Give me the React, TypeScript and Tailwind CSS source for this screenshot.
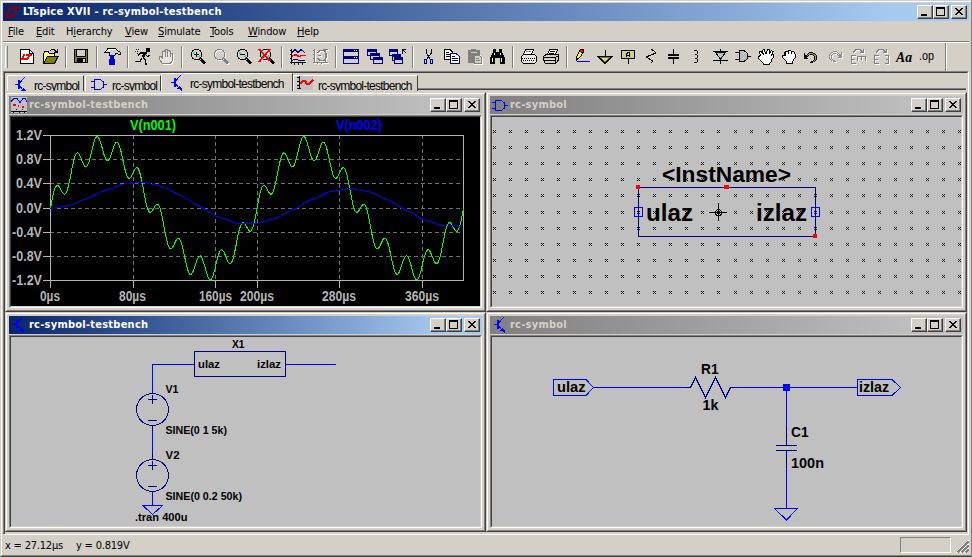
import React from "react";

const TAHOMA = "font-['DejaVu_Sans_Condensed','DejaVu_Sans',sans-serif]";
const ARIAL = "font-['Liberation_Sans',Arial,sans-serif]";

/* ---------- small glyphs ---------- */

function LTLogo() {
  return (
    <svg width="16" height="16" viewBox="0 0 16 16" fill="none" stroke="#8b0000" strokeWidth="2" className="block">
      <path d="M4.5 3 L1.5 12.5 H8" />
      <path d="M6 4 H15 M11.5 4 L8.5 13" />
    </svg>
  );
}

function TransistorIcon() {
  return (
    <svg width="16" height="16" viewBox="0 0 16 16" fill="none" stroke="#0000ff" shapeRendering="crispEdges" className="block">
      <path d="M2 7.5 H6" strokeWidth="1" />
      <path d="M6 3 V12" strokeWidth="2" />
      <path d="M7 5.5 L12 0 M7 9.5 L12 15" strokeWidth="1" />
      <path d="M13 16 V14 L10.5 11 L8 14 H10 L12 16 Z" fill="#0000ff" stroke="none" />
    </svg>
  );
}

function GateIcon() {
  return (
    <svg width="16" height="16" viewBox="0 0 16 16" fill="none" stroke="#0000ff" shapeRendering="crispEdges" className="block">
      <path d="M3.5 3.5 H9 L12.5 6 V11 L9 13.5 H3.5 Z M0 5.5 H3 M0 11.5 H3 M13 8.5 H16" />
    </svg>
  );
}

function PlotIcon() {
  return (
    <svg width="16" height="16" viewBox="0 0 16 16" fill="none" shapeRendering="crispEdges" className="block">
      <rect width="16" height="16" fill="#c0c0c0" />
      <path d="M0 4.5 L3 1.5 H6 L9 5.5 L12 1.5 H14 L16 4.5" stroke="#0000ff" />
      <path d="M2 8 H5 M7 9 H8 M11 10 H13" stroke="#ff0000" strokeWidth="2" />
      <path d="M0 14.5 H16 M2.5 15 V16 M8.5 15 V16 M13.5 15 V16" stroke="#000" />
      <path d="M5 12.5 H6 M11 12.5 H12" stroke="#000080" />
    </svg>
  );
}

function TraceIcon() {
  return (
    <svg width="17" height="14" viewBox="0 0 17 14" fill="none" shapeRendering="crispEdges" className="block">
      <rect width="16" height="14" fill="#c0c0c0" />
      <path d="M2.5 0 V13 M0 1.5 H2 M0 5.5 H2 M0 9.5 H2 M0 12.5 H4" stroke="#000" />
      <path d="M3 7.5 L6 5 L8 5 L10 8 L12 8 L16 4" stroke="#ff0000" strokeWidth="2" />
    </svg>
  );
}

/* ---------- toolbar icons, each on a 23 x 22 cell ---------- */

const K = "#000";
const N = "#000080";

function Cell({ children, smooth }: { children: React.ReactNode; smooth?: boolean }) {
  return (
    <svg
      width="23"
      height="22"
      viewBox="0 0 23 22"
      fill="none"
      className="shrink-0"
      shapeRendering={smooth ? "auto" : "crispEdges"}
    >
      {children}
    </svg>
  );
}

/* Greyed-out drawing: a white copy, one pixel down and right, below the grey one */
function Disabled({ children }: { children: React.ReactNode }) {
  return (
    <>
      <g stroke="#fff" transform="translate(1 1)">{children}</g>
      <g stroke="#808080">{children}</g>
    </>
  );
}

const palette: Record<string, string> = {
  k: "#000000",
  w: "#ffffff",
  g: "#808080",
  y: "#ffff00",
  o: "#a0a000",
  r: "#ff0000",
  b: "#0000ff",
  c: "#00e0e0",
};

/* One character per pixel, a dot is transparent */
function Pixels({ x, y, rows, only, tint }: { x: number; y: number; rows: string[]; only?: string; tint?: string }) {
  return (
    <g stroke="none">
      {rows.flatMap((row, j) =>
        row.split("").map((c, i) =>
          c === "." || (only && c !== only) ? null : (
            <rect key={`${i}-${j}`} x={x + i} y={y + j} width="1" height="1" fill={tint ?? palette[c]} />
          ),
        ),
      )}
    </g>
  );
}

const lens = [
  "...kkkkk.......",
  ".kk.....kk.....",
  ".k.......k.....",
  "k.cc......k....",
  "k.c.......k....",
  "k.........k....",
  "k.......c.k....",
  "k......cc.k....",
  ".k......ck.....",
  ".kk.....kkk....",
  "...kkkkkk.kk...",
  ".........kkkk..",
  "..........kkkk.",
  "...........kkkk",
  "............kk.",
];

const pencil = [
  ".....kkkk......",
  "....krrrk......",
  "....krrrk......",
  "...kyykkk......",
  "...kyyyk.......",
  "..kyyyk........",
  "..kyyyk........",
  ".kyyyk.........",
  ".kyyk..........",
  ".kkk...........",
  ".kk............",
  ".k.............",
  "..bbbbbbbbbbbbb",
];

const undoArrow = [
  ".....kkkk.....",
  "k...kooookk...",
  "k..kookkkook..",
  "kkkok....kook.",
  "kkkk......kok.",
  "kkk.......kok.",
  "kkkk......kok.",
  "..........kok.",
  ".........kok..",
  ".......kkok...",
  "......kkk.....",
];

const redoArrow = undoArrow.map((r) => r.split("").reverse().join(""));

const coil = ["kkk.", "...k", "...k", "...k", ".kk.", "...k", "...k", "...k", ".kk.", "...k", "...k", "...k", "kkk."];

function MirrorE() {
  return (
    <path d="M4.5 9 V18 M4 9.5 H9 M4 13.5 H8 M4 17.5 H9 M6 6.5 L9 3.5 H13 L16 6.5 M13 6.5 H17 M16.5 3 V7" />
  );
}

const handPath =
  "M7.5 17.5 L4 12.5 V10.5 H6 L7.5 12 V5.5 H9 V4.5 H10.5 V3.5 H12 V4.5 H14 V5.5 H15.5 V7 H17.5 V14 L15.5 17.5 Z";

const groups: React.ReactNode[][] = [
  [
    <Cell key="new">
      <path d="M4.5 3.5 H13.5 L17.5 7.5 V17.5 H4.5 Z" fill="#fff" stroke={K} />
      <path d="M13.5 3.5 V7.5 H17.5" stroke={K} />
      <path d="M8.5 8 L6 13 H11 M9.5 9 H16 M14 8 L11 14" stroke="#ff0000" strokeWidth="2" />
    </Cell>,
    <Cell key="open">
      <path d="M4.5 17 V7.5 L6 5.5 H9 L10.5 7.5 H15.5 V10" fill="#ffff80" stroke={K} />
      <path d="M4.5 17.5 L8.5 10.5 H19 L15.5 17.5 Z" fill="#808000" stroke={K} />
      <path d="M11 4.5 L12.5 3.5 H15 L17.5 6 M18.5 3 V7 M15 6.5 H18" stroke={K} />
    </Cell>,
  ],
  [
    <Cell key="save">
      <rect x="4.5" y="3.5" width="13" height="13" fill="#808000" stroke={K} />
      <rect x="7" y="4" width="8" height="7" fill="#d4d0c8" />
      <path d="M6.5 4 V11 M15.5 4 V11 M7 10.5 H15" stroke={K} />
      <rect x="7" y="12" width="9" height="5" fill={K} />
      <rect x="13" y="13" width="2" height="3" fill="#d4d0c8" />
    </Cell>,
  ],
  [
    <Cell key="hammer">
      <path d="M3.5 6.5 L6.5 3.5 H15 L19.5 6.5 V8.5 L15 7.5 L13.5 9.5 H9 L8 6.5 Z" fill="#d4d0c8" stroke={K} />
      <path d="M7 3.5 H15 M6 4.5 H9" stroke="#fff" />
      <path d="M6 2.5 H15" stroke={K} />
      <path d="M9 9 H13 V13 H14 V18 H8 V13 H9 Z" fill="#0000ff" />
      <path d="M12.5 10 V18 M13.5 13 V17 M8 18.5 H14" stroke={N} />
    </Cell>,
  ],
  [
    <Cell key="run">
      <rect x="14" y="2" width="4" height="4" fill={K} />
      <path d="M14 6 L10.5 11.5" stroke={K} strokeWidth="2.6" />
      <path d="M13 7 H8 L6 10 M13 8 L15.5 10.5 L18 9 M11 12 L13.5 14 V18 H15 M10 12 L8 15.5 H3" stroke={K} strokeWidth="1.3" />
      <path d="M4 3.5 H7 M3 5.5 H6 M5 7.5 H7" stroke={K} strokeDasharray="1 1" />
    </Cell>,
    <Cell key="halt">
      <g transform="translate(1 1)"><path d={handPath} stroke="#fff" /></g>
      <path d={handPath} fill="#e8e6e0" stroke="#808080" />
      <path d="M10.5 5 V11 M12.5 5 V11 M15.5 6 V11" stroke="#808080" />
    </Cell>,
  ],
  [
    <Cell key="zoom-in">
      <Pixels x={5} y={3} rows={lens} />
      <path d="M8 8.5 H13 M10.5 6 V11" stroke={K} />
    </Cell>,
    <Cell key="pan">
      <Pixels x={6} y={4} rows={lens} only="k" tint="#fff" />
      <Pixels x={5} y={3} rows={lens} only="k" tint="#808080" />
    </Cell>,
    <Cell key="zoom-out">
      <Pixels x={5} y={3} rows={lens} />
      <path d="M8 8.5 H13" stroke={K} />
    </Cell>,
    <Cell key="zoom-fit">
      <Pixels x={5} y={3} rows={lens} />
      <path d="M4 3 L15 15 M15 3 L4 16" stroke="#ff0000" strokeWidth="1.8" />
    </Cell>,
  ],
  [
    <Cell key="autorange">
      <path d="M5.5 3 V18 M4 16.5 H20 M4 4.5 H6 M4 8.5 H6 M4 12.5 H6 M8.5 17 V19 M12.5 17 V19 M16.5 17 V19" stroke={K} />
      <path d="M6 6.5 L9 3.5 L12 6.5 L15 3.5 L19 7 M6 14.5 L9 13 L13 14.5 H19" stroke={N} />
      <path d="M6 10.5 L9 8.5 L13 10.5 L16 9.5 H20" stroke="#ff0000" strokeWidth="1.5" />
    </Cell>,
    <Cell key="autorange-off">
      <Disabled>
        <path d="M5.5 3 V17 M4 16.5 H19 M4 4.5 H6 M4 8.5 H6 M4 12.5 H6 M8.5 17 V18 M12.5 17 V18 M8.5 7 L11 4.5 H15 L17 7 V12 L15 14.5 H11 L8.5 12 M9 9.5 H12 M16.5 3 V16 M14 3.5 H19" />
      </Disabled>
    </Cell>,
  ],
  [
    <Cell key="tile">
      <path d="M3.5 3 V17.5 H18.5 V3" stroke={N} />
      <path d="M3 4.5 H19 M3 11.5 H19" stroke={N} strokeWidth="3" />
      <path d="M14 4.5 H18 M14 11.5 H18" stroke="#fff" strokeDasharray="1 1" />
    </Cell>,
    <Cell key="cascade">
      {[0, 3, 6].map((d) => (
        <g key={d} transform={`translate(${d} ${Math.round(d * 1.34)})`}>
          <rect x="4.5" y="3.5" width="9" height="6" fill="#d4d0c8" stroke={N} />
          <path d="M4 4.5 H14" stroke={N} strokeWidth="3" />
        </g>
      ))}
    </Cell>,
    <Cell key="close-all">
      {[0, 3, 5].map((d) => (
        <g key={d} transform={`translate(${d} ${Math.round(d * 1.5)})`}>
          <rect x="3.5" y="3.5" width="8" height="6" fill="#d4d0c8" stroke={N} />
          <path d="M3 4.5 H12" stroke={N} strokeWidth="3" />
        </g>
      ))}
      <path d="M16 7.5 V3.5 H20 M16 3 L20 7" stroke={K} />
    </Cell>,
  ],
  [
    <Cell key="cut">
      <path d="M9.5 3 V7 L13 13 M14.5 3 V7 L10 13" stroke={K} />
      <path d="M7.5 13.5 H9.5 V17.5 H7.5 Z M13.5 13.5 H15.5 V17.5 H13.5 Z" stroke={N} />
    </Cell>,
    <Cell key="copy">
      <path d="M4.5 3.5 H10 L12.5 6 V13.5 H4.5 Z" fill="#fff" stroke={K} />
      <path d="M6 6.5 H9 M6 8.5 H10 M6 10.5 H10" stroke={K} />
      <path d="M10.5 7.5 H16 L19.5 10.5 V17.5 H10.5 Z" fill="#fff" stroke={N} />
      <path d="M12 10.5 H15 M12 12.5 H18 M12 14.5 H18" stroke={N} />
    </Cell>,
    <Cell key="paste">
      <path d="M5 4 H8 V3 H13 V4 H17 V17 H5 Z" fill="#808080" />
      <path d="M8 6.5 H14" stroke="#d4d0c8" />
      <path d="M11.5 9.5 H17 L19.5 12 V18.5 H11.5 Z" fill="#d4d0c8" stroke="#fff" />
      <path d="M11.5 9.5 H16.5 L18.5 11.5 V17.5 H11.5 Z M13 12.5 H16 M13 14.5 H17" stroke="#808080" />
    </Cell>,
    <Cell key="find">
      <path d="M7 3 H10 V6 H13 V3 H16 V6 L19 12 V18 H14 V12 H9 V18 H4 V12 L7 6 Z" fill={K} />
      <path d="M8.5 7 V9 M6.5 12 V16 M14.5 7 V9 M15.5 12 V16" stroke="#fff" />
    </Cell>,
  ],
  [
    <Cell key="print-setup">
      <path d="M6.5 8.5 L8.5 3.5 H16.5 L14.5 8.5" fill="#fff" stroke={K} />
      <path d="M4.5 10.5 L6.5 8.5 H17.5 L19.5 10.5 V15.5 L17.5 17.5 H6.5 L4.5 15.5 Z" fill="#e8e6e0" stroke={K} />
      <path d="M5 12.5 H19 M6 14.5 H18" stroke={K} strokeDasharray="1 1" />
      <path d="M9 5.5 H14" stroke="#808080" />
    </Cell>,
    <Cell key="print">
      <path d="M7.5 8.5 L9.5 3.5 H17.5 L15.5 8.5" fill="#fff" stroke={K} />
      <path d="M10 5.5 H15 M9 7.5 H14" stroke={K} />
      <path d="M3.5 10.5 L6 8.5 H18.5 V14 L15.5 17.5 H5.5 L3.5 14.5 Z" fill="#d4d0c8" stroke={K} />
      <path d="M4 11.5 H15 M4 14.5 H15 M15.5 11 V17 M16 10.5 H18" stroke={K} />
      <path d="M11 13 H13" stroke="#ffff00" />
    </Cell>,
  ],
  [
    <Cell key="wire">
      <Pixels x={4} y={3} rows={pencil} />
    </Cell>,
    <Cell key="ground">
      <path d="M5 11 H17 L11 17 Z" fill="#d4d0c8" stroke="#808000" strokeWidth="2" />
      <path d="M4.5 11 L11 17.5 L17.5 11" stroke={K} />
      <path d="M3 10.5 H19 M11 4 V10" stroke={K} />
    </Cell>,
    <Cell key="label">
      <rect x="4.5" y="4.5" width="13" height="8" rx="1" fill="#d0cc90" stroke={K} />
      <path d="M9.5 11 V7 H10 V6.5 H12.5 V11 M9.5 9 H12.5 M11.5 13 V18" stroke={K} />
    </Cell>,
    <Cell key="resistor">
      <path d="M11.5 3 L16 7 L6 11 L13 15 L10.5 17.5" stroke={K} />
    </Cell>,
    <Cell key="capacitor">
      <path d="M10.5 3 V9 M5 9 H16 M5 12 H16 M10.5 12 V18" stroke={K} strokeWidth="1.5" />
    </Cell>,
    <Cell key="inductor">
      <Pixels x={8} y={4} rows={coil} />
    </Cell>,
    <Cell key="diode">
      <path d="M11.5 3 V18 M4 5.5 H19" stroke={K} />
      <path d="M6 6 L11.5 13 L17 6 Z" fill="#c0c0c0" stroke={K} />
      <path d="M4 14.5 H19" stroke={K} />
    </Cell>,
    <Cell key="component">
      <path d="M7.5 4.5 H12 L15.5 7.5 V12.5 L12 15.5 H7.5 Z" fill="#c0c0c0" stroke={K} />
      <path d="M3 6.5 H7 M3 13.5 H7 M16 10.5 H19" stroke={K} />
    </Cell>,
    <Cell key="move">
      <path
        d="M7.5 16.5 L3.5 12.5 V10.5 L5.5 9.5 L4.5 6.5 V5.5 H6.5 L8.5 9 L7.5 4.5 L9 3.5 L11 8 L12.5 3.5 H14 V8 L16.5 4.5 L18 5.5 L16.5 9 L18.5 8.5 V11 L16 14.5 V16 L14 18.5 H9 Z"
        fill="#fff"
        stroke={K}
      />
    </Cell>,
    <Cell key="drag">
      <path d="M8.5 15.5 L4.5 11.5 V9.5 H6.5 V7.5 L7.5 5.5 H9.5 L10.5 4.5 H12.5 L13.5 5.5 H15.5 L17.5 8.5 V11 L14.5 15.5 V17.5 H8.5 Z" fill="#fff" stroke={K} />
      <path d="M7.5 7 V10 M10.5 5 V8 M13.5 6 V8" stroke={K} />
    </Cell>,
    <Cell key="undo">
      <Pixels x={3} y={6} rows={undoArrow} />
    </Cell>,
    <Cell key="redo">
      <Pixels x={5} y={6} rows={redoArrow} only="k" tint="#fff" />
      <Pixels x={4} y={5} rows={redoArrow} only="k" tint="#909090" />
    </Cell>,
    <Cell key="rotate">
      <Disabled>
        <MirrorE />
        <path d="M10.5 10.5 H19 M10.5 10 V15 M14.5 10 V14 M18.5 10 V15" />
      </Disabled>
    </Cell>,
    <Cell key="mirror">
      <Disabled>
        <MirrorE />
        <path d="M18.5 9 V18 M15 9.5 H19 M16 13.5 H19 M15 17.5 H19" />
      </Disabled>
    </Cell>,
    <Cell key="text" smooth>
      <text x="3" y="16" fill={K} textLength="16" lengthAdjust="spacingAndGlyphs" className="font-['Liberation_Serif',serif] text-[14px] font-bold italic">
        Aa
      </text>
    </Cell>,
    <Cell key="directive" smooth>
      <text x="3" y="14" fill={K} textLength="15" lengthAdjust="spacingAndGlyphs" className="font-['Liberation_Sans',sans-serif] text-[12px]">
        .op
      </text>
    </Cell>,
  ],
];

/* ---------- window chrome ---------- */

function CaptionButton({ kind }: { kind: "min" | "max" | "close" }) {
  return (
    <div className={`h-[14px] w-4 border border-t-white border-l-white border-r-[#404040] border-b-[#404040] bg-[#d4d0c8] ${kind === "close" ? "ml-[2px]" : ""}`}>
      <div className="h-full border-r border-b border-[#808080]">
        <svg width="13" height="11" viewBox="0 0 13 11" shapeRendering="crispEdges" className="block" fill="#000">
          {kind === "min" && <path d="M3 8h6v2h-6z" />}
          {kind === "max" && <path fillRule="evenodd" d="M2 1h9v9h-9z M3 3h7v6h-7z" />}
          {kind === "close" && (
            <path d="M3 2h2v1h-2z M9 2h2v1h-2z M4 3h2v1h-2z M8 3h2v1h-2z M5 4h4v1h-4z M6 5h2v1h-2z M5 6h4v1h-4z M4 7h2v1h-2z M8 7h2v1h-2z M3 8h2v1h-2z M9 8h2v1h-2z" />
          )}
        </svg>
      </div>
    </div>
  );
}

function TitleBar({ icon, title, active }: { icon: React.ReactNode; title: string; active?: boolean }) {
  return (
    <div
      className={`flex h-[18px] items-center bg-linear-to-r to-92% pr-[2px] pl-[2px] ${
        active ? "from-[#0a246a] to-[#a6caf0] text-white" : "from-[#808080] to-[#c0c0c0] text-[#d4d0c8]"
      }`}
    >
      <div className="w-[18px]">{icon}</div>
      <div className={`flex-1 text-[11px] leading-[16px] font-bold tracking-[0.24px] whitespace-pre ${TAHOMA}`}>{title}</div>
      <CaptionButton kind="min" />
      <CaptionButton kind="max" />
      <CaptionButton kind="close" />
    </div>
  );
}

function Child({
  icon,
  title,
  active,
  view,
  black,
  children,
}: {
  icon: React.ReactNode;
  title: string;
  active?: boolean;
  view: string;
  black?: boolean;
  children: React.ReactNode;
}) {
  return (
    <div className="h-[220px] w-[481px] border border-t-[#d4d0c8] border-r-[#404040] border-b-[#404040] border-l-[#d4d0c8]">
      <div className="h-full border border-t-white border-r-[#808080] border-b-[#808080] border-l-white p-[2px]">
        <TitleBar icon={icon} title={title} active={active} />
        <div className="mt-px border border-t-[#808080] border-r-white border-b-white border-l-[#808080]">
          <div className="border border-t-[#404040] border-r-[#d4d0c8] border-b-[#d4d0c8] border-l-[#404040]">
            <svg
              width="469"
              height="189"
              viewBox={view}
              className={`block ${black ? "bg-black" : "bg-[#c0c0c0]"} ${ARIAL} font-bold`}
              fill="none"
              shapeRendering="crispEdges"
            >
              {children}
            </svg>
          </div>
        </div>
      </div>
    </div>
  );
}

function Label({ x, y, w, size, color = "#000", children }: { x: number; y: number; w: number; size: number; color?: string; children: string }) {
  return (
    <text x={x} y={y} fontSize={size} fill={color} stroke="none" textLength={w} lengthAdjust="spacingAndGlyphs">
      {children}
    </text>
  );
}

/* ---------- waveform viewer ---------- */

const TAU = 100;
const toX = (t: number) => 50.5 + (t * 413) / 400;
const toY = (v: number) => 208.3 - v * 60.4;

function trace(f: (t: number) => number) {
  const pts: string[] = [];
  for (let t = 0; t <= 400; t += 1) pts.push(`${toX(t).toFixed(2)},${toY(f(t)).toFixed(2)}`);
  return pts.join(" ");
}

const input = (t: number) => Math.sin((2 * Math.PI * t) / 200) + 0.2 * Math.sin((2 * Math.PI * t) / 20);
const output = (t: number) =>
  0.3033 * Math.sin((2 * Math.PI * t) / 200 - 1.2626) +
  0.2953 * Math.exp(-t / TAU) -
  0.00636 * Math.cos((2 * Math.PI * t) / 20);

function Waveform() {
  const rows: [string, number, number, number][] = [
    ["1.2V", 135, 16, 26],
    ["0.8V", 159, 16, 26],
    ["0.4V", 183, 16, 26],
    ["0.0V", 208, 16, 26],
    ["-0.4V", 232, 12, 30],
    ["-0.8V", 256, 12, 30],
    ["-1.2V", 280, 12, 30],
  ];
  const cols: [string, number, number, number][] = [
    ["0µs", 50, 40, 20],
    ["80µs", 133, 119, 27],
    ["160µs", 215, 199, 33],
    ["200µs", 257, 240, 34],
    ["280µs", 339, 322, 34],
    ["360µs", 422, 405, 34],
  ];
  return (
    <>
      {rows.map(([s, y, x, w]) => (
        <g key={s}>
          <Label x={x} y={y + 5} w={w} size={14} color="#b4b4b4">{s}</Label>
          <path d={`M43 ${y + 0.5} H50`} stroke="#b4b4b4" />
          {y !== 135 && y !== 280 && <path d={`M50 ${y + 0.5} H463`} stroke="#707070" strokeDasharray="4 3" />}
        </g>
      ))}
      {cols.map(([s, x, lx, w]) => (
        <g key={s}>
          <Label x={lx} y={301} w={w} size={14} color="#b4b4b4">{s}</Label>
          <path d={`M${x + 0.5} 280 V288`} stroke="#b4b4b4" />
          {x !== 50 && <path d={`M${x + 0.5} 135 V280`} stroke="#707070" strokeDasharray="4 3" />}
        </g>
      ))}
      <rect x="50.5" y="135.5" width="413" height="145" stroke="#b4b4b4" />
      <Label x={130} y={130} w={46} size={14} color="#00ff00">V(n001)</Label>
      <Label x={336} y={130} w={46} size={14} color="#0000ff">V(n002)</Label>
      <polyline points={trace(input)} stroke="#00ff00" />
      <polyline points={trace(output)} stroke="#0000ff" />
    </>
  );
}

/* ---------- symbol editor ---------- */

function SymbolEditor() {
  const xs = Array.from({ length: 30 }, (_, i) => 493 + 16 * i + (i > 14 ? 1 : 0));
  const ys = Array.from({ length: 11 }, (_, i) => 130 + 16 * i + (i > 4 ? 1 : 0));
  const dots = ys
    .map((y) => xs.map((x) => `M${x} ${y}h1v1h-1z M${x + 2} ${y}h1v1h-1z M${x + 1} ${y + 1}h1v1h-1z M${x} ${y + 2}h1v1h-1z M${x + 2} ${y + 2}h1v1h-1z`).join(" "))
    .join(" ");
  return (
    <>
      <path d={dots} fill="#000" />
      <rect x="638.5" y="187.5" width="177" height="49" stroke="#000080" />
      <Label x={662} y={182} w={129} size={22.5}>{"<InstName>"}</Label>
      <Label x={646} y={221} w={47} size={23}>ulaz</Label>
      <Label x={756} y={221} w={51} size={23}>izlaz</Label>
      <path d="M709 212.5 H727 M718.5 203 V221" stroke="#000" />
      <circle cx="718.5" cy="212.5" r="3" stroke="#000" />
      <rect x="634.5" y="207.5" width="8" height="9" stroke="#0000ff" />
      <rect x="811.5" y="207.5" width="8" height="9" stroke="#0000ff" />
      <path d="M636 185h4v4h-4z M724 185h5v4h-5z M813 234h4v4h-4z" fill="#ff0000" />
    </>
  );
}

/* ---------- schematics ---------- */

function Source({ cy }: { cy: number }) {
  return (
    <g stroke="#000080">
      <circle cx="152.5" cy={cy + 0.5} r="16" />
      <path d={`M148 ${cy - 9.5} H157 M152.5 ${cy - 14} V${cy - 5} M148 ${cy + 11.5} H157`} />
    </g>
  );
}

function Testbench() {
  return (
    <>
      <path d="M194 364.5 H152.5 V393 M286 364.5 H336 M152.5 430 V455 M152.5 491 V505" stroke="#0000ff" />
      <path d="M152.5 425 V431 M152.5 454 V459" stroke="#000080" />
      <path d="M143 505.5 H162.5 L152.5 514.5 Z" stroke="#0000ff" />
      <rect x="194.5" y="351.5" width="91" height="25" stroke="#000080" />
      <Source cy={409} />
      <Source cy={475} />
      <Label x={232} y={348} w={12.5} size={11}>X1</Label>
      <Label x={198} y={368} w={22} size={11}>ulaz</Label>
      <Label x={257} y={368} w={24} size={11}>izlaz</Label>
      <Label x={165.5} y={393} w={13} size={11}>V1</Label>
      <Label x={165.5} y={434} w={61.5} size={11}>SINE(0 1 5k)</Label>
      <Label x={165.5} y={459} w={14} size={11}>V2</Label>
      <Label x={165.5} y={500} w={76.5} size={11}>SINE(0 0.2 50k)</Label>
      <Label x={135} y={521} w={52.5} size={11}>.tran 400u</Label>
    </>
  );
}

function Schematic() {
  return (
    <>
      <path d="M593 387.5 H686 M735 387.5 H857 M786.5 387 V428 M786.5 468 V508" stroke="#0000ff" />
      <path d="M686 387.5 H690.5 L695.5 377.5 L705.5 397.5 L715.5 377.5 L725.5 397.5 L730.5 387.5 H735" stroke="#000080" />
      <path d="M786.5 428 V445 M776 445.5 H797 M776 450.5 H797 M786.5 450 V468" stroke="#000080" />
      <path d="M553.5 379.5 H586 L593.5 387.5 L586 395.5 H553.5 Z" stroke="#0000ff" />
      <path d="M857.5 379.5 H892 L900.5 387.5 L892 395.5 H857.5 Z" stroke="#0000ff" />
      <path d="M774.5 508.5 H797.5 L786.5 520 Z" stroke="#0000ff" />
      <rect x="783" y="384" width="7" height="7" fill="#0000ff" />
      <Label x={557} y={392} w={28.5} size={14}>ulaz</Label>
      <Label x={859} y={392} w={30} size={14}>izlaz</Label>
      <Label x={701} y={374} w={17.5} size={14}>R1</Label>
      <Label x={702.5} y={410} w={16} size={14}>1k</Label>
      <Label x={791} y={437} w={17.5} size={14}>C1</Label>
      <Label x={791} y={468} w={33} size={14}>100n</Label>
    </>
  );
}

/* ---------- tabs ---------- */

function Tab({ icon, title, width, active }: { icon: React.ReactNode; title: string; width: string; active?: boolean }) {
  return (
    <div
      className={`flex overflow-hidden rounded-tl-[2px] border-t border-r border-l border-t-white border-r-[#404040] border-l-white bg-[#d4d0c8] ${width} ${
        active ? "h-[18px]" : "h-4"
      }`}
    >
      {icon}
      <div className={`text-[12px] tracking-[-0.75px] whitespace-pre text-black ${ARIAL} ${active ? "mt-[3px] leading-[15px]" : "mt-[2px] leading-[16px]"}`}>
        {title}
      </div>
    </div>
  );
}

const menus: [string, string, string, string][] = [
  ["", "F", "ile", "w-[28px]"],
  ["", "E", "dit", "w-[30px]"],
  ["H", "i", "erarchy", "w-[59px]"],
  ["", "V", "iew", "w-[33px]"],
  ["", "S", "imulate", "w-[52px]"],
  ["", "T", "ools", "w-[38px]"],
  ["", "W", "indow", "w-[49px]"],
  ["", "H", "elp", "w-[30px]"],
];

export default function App() {
  return (
    <div className="flex h-[557px] w-[972px] flex-col overflow-hidden border-t border-r border-b border-l border-t-[#d4d0c8] border-r-[#808080] border-b-[#404040] border-l-[#d4d0c8] bg-[#d4d0c8]">
      <div className="flex flex-1 flex-col border-t border-b border-l border-t-white border-b-[#808080] border-l-white">
        <div className="mt-px mr-[2px] ml-px">
          <TitleBar icon={<LTLogo />} title="LTspice XVII - rc-symbol-testbench" active />
        </div>

        <div className={`mr-[2px] ml-px h-[22px] border-b border-b-white ${TAHOMA}`}>
          <div className="flex h-[21px] border-b border-b-[#808080] pl-[5px]">
            {menus.map(([a, u, b, w]) => (
              <div key={u + b} className={`shrink-0 pt-[2px] text-[11px] leading-[17px] tracking-[-0.15px] text-black ${w}`}>
                {a}
                <span className="underline underline-offset-1">{u}</span>
                {b}
              </div>
            ))}
          </div>
        </div>

        <div className="mr-[2px] ml-px flex h-[28px] items-stretch">
          <div className="mt-[3px] mr-2 ml-[2px] h-[22px] w-[3px] border-r border-l border-r-[#808080] border-l-white" />
          <div className="flex pt-[3px]">
            {groups.map((g, i) => (
              <React.Fragment key={i}>
                {i > 0 && <div className="mr-[3px] ml-[3px] h-[22px] w-[2px] border-r border-l border-r-white border-l-[#808080]" />}
                {g}
              </React.Fragment>
            ))}
          </div>
          <div className="ml-[6px] w-[2px] border-r border-l border-r-white border-l-[#808080]" />
        </div>

        <div className="mr-[2px] ml-px h-[464px] border border-t-[#808080] border-r-white border-b-white border-l-[#808080]">
          <div className="h-full border-t border-r border-l border-t-[#404040] border-r-[#d4d0c8] border-l-[#404040]">
            <div className="flex h-[19px] items-start pr-px">
              <div className="flex h-[18px] items-end pl-[2px]">
                <Tab width="w-[77px]" icon={<div className="mt-px mr-[5px] ml-[5px]"><TransistorIcon /></div>} title="rc-symbol" />
                <div className="ml-px">
                  <Tab width="w-[76px]" icon={<div className="mr-[5px] ml-[5px]"><GateIcon /></div>} title="rc-symbol" />
                </div>
                <Tab width="w-[132px]" active icon={<div className="mt-px mr-[5px] ml-[7px]"><TransistorIcon /></div>} title="rc-symbol-testbench" />
                <Tab width="w-[125px]" icon={<div className="mr-[4px] ml-[3px]"><TraceIcon /></div>} title="rc-symbol-testbench" />
              </div>
              <div className="h-[17px] flex-1 border-b border-b-[#404040]">
                <div className="h-4 border-b border-b-[#808080]" />
              </div>
            </div>
            <div className="grid w-[962px] grid-cols-2">
              <Child icon={<PlotIcon />} title="rc-symbol-testbench" view="11 117 469 189" black>
                <Waveform />
              </Child>
              <Child icon={<GateIcon />} title="rc-symbol" view="492 117 469 189">
                <SymbolEditor />
              </Child>
              <Child icon={<TransistorIcon />} title="rc-symbol-testbench" view="11 337 469 189" active>
                <Testbench />
              </Child>
              <Child icon={<TransistorIcon />} title="rc-symbol" view="492 337 469 189">
                <Schematic />
              </Child>
            </div>
          </div>
        </div>

        <div className="flex flex-1 items-start pl-[3px]">
          <div className={`flex-1 pt-[3px] text-[11px] leading-[16px] whitespace-pre text-black ${TAHOMA}`}>
            <span className="inline-block w-[71px] tracking-[-0.2px]">x = 27.12µs</span>
            <span className="tracking-[-0.2px]">y = 0.819V</span>
          </div>
          <div className="mt-[2px] h-4 w-[51px] border border-t-[#808080] border-r-white border-b-white border-l-[#808080]" />
          <svg width="13" height="13" viewBox="0 0 13 13" className="mt-[5px] mr-[2px] ml-[5px]" shapeRendering="crispEdges" fill="none">
            <path d="M0 12.5 L12.5 0 M4 12.5 L12.5 4 M8 12.5 L12.5 8" stroke="#fff" />
            <path d="M1.5 12.5 L12.5 1.5 M5.5 12.5 L12.5 5.5 M9.5 12.5 L12.5 9.5" stroke="#808080" strokeWidth="1.6" />
          </svg>
        </div>
      </div>
    </div>
  );
}
